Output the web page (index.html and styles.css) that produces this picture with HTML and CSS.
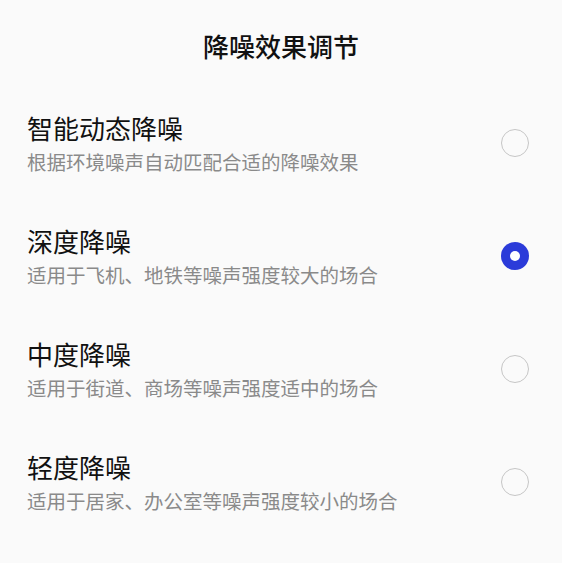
FILE: index.html
```html
<!DOCTYPE html>
<html lang="zh-CN">

<head>
    <meta charset="UTF-8">
    <meta name="viewport" content="width=device-width, initial-scale=1.0">
    <title>降噪效果调节</title>
    <link rel="stylesheet" href="styles.css">
</head>

<body>
    <!-- 标题 -->
    <div class="header">降噪效果调节</div>
    <!-- 降噪模式列表 -->
    <ul class="modeList">
        <li class="modeItem">
            <div class="modeText">
                <div class="modeName">智能动态降噪</div>
                <div class="modeDesc">根据环境噪声自动匹配合适的降噪效果</div>
            </div>
            <span class="radio"></span>
        </li>
        <li class="modeItem">
            <div class="modeText">
                <div class="modeName">深度降噪</div>
                <div class="modeDesc">适用于飞机、地铁等噪声强度较大的场合</div>
            </div>
            <span class="radio checked"></span>
        </li>
        <li class="modeItem">
            <div class="modeText">
                <div class="modeName">中度降噪</div>
                <div class="modeDesc">适用于街道、商场等噪声强度适中的场合</div>
            </div>
            <span class="radio"></span>
        </li>
        <li class="modeItem">
            <div class="modeText">
                <div class="modeName">轻度降噪</div>
                <div class="modeDesc">适用于居家、办公室等噪声强度较小的场合</div>
            </div>
            <span class="radio"></span>
        </li>
    </ul>
</body>

</html>
```

FILE: styles.css
```css
* {
    margin: 0;
    padding: 0;
}

body {
    background-color: #fafafa;
    font-family: "Noto Sans CJK SC", "Noto Sans", sans-serif;
    width: 562px;
    height: 563px;
    overflow: hidden;
}
/* 标题 */

.header {
    height: 86px;
    box-sizing: border-box;
    padding-top: 29px;
    font-size: 26px;
    line-height: 34px;
    font-weight: 500;
    color: #111;
    text-align: center;
}
/* 列表 */

.modeList {
    list-style: none;
}

.modeItem {
    height: 113px;
    display: flex;
    align-items: center;
    justify-content: space-between;
    padding: 0 33px 0 27px;
}

.modeName {
    font-size: 26px;
    line-height: 34px;
    color: #111;
}

.modeDesc {
    margin-top: 4px;
    font-size: 19.5px;
    line-height: 26px;
    color: #8a8a8a;
}
/* 单选按钮 */

.radio {
    width: 28px;
    height: 28px;
    box-sizing: border-box;
    border: 1.5px solid #c6c6c6;
    border-radius: 50%;
    display: flex;
    align-items: center;
    justify-content: center;
}

.radio.checked {
    border: none;
    background-color: #2b3bd9;
}

.radio.checked::after {
    content: "";
    width: 10px;
    height: 10px;
    border-radius: 50%;
    background-color: #fff;
}
```
